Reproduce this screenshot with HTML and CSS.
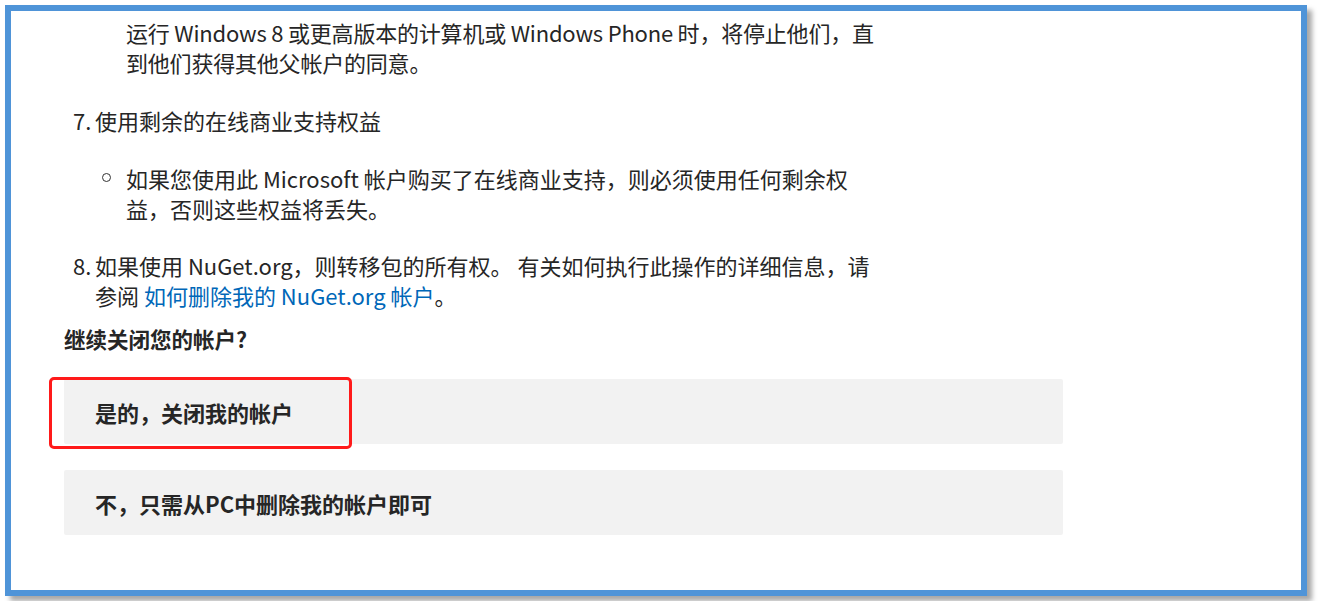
FILE: index.html
```html
<!DOCTYPE html>
<html lang="zh-CN">
<head>
<meta charset="utf-8">
<title>关闭帐户</title>
<link rel="stylesheet" href="styles.css">
</head>
<body>
<div class="frame">
  <div class="content">
    <div class="cont">运行 Windows 8 或更高版本的计算机或 Windows Phone 时，将停止他们，直<br>到他们获得其他父帐户的同意。</div>

    <div class="item item7">
      <span class="num">7.</span>
      <span class="txt">使用剩余的在线商业支持权益</span>
    </div>

    <div class="sub">
      <span class="circle"></span>
      <span class="txt">如果您使用此 Microsoft 帐户购买了在线商业支持，则必须使用任何剩余权<br>益，否则这些权益将丢失。</span>
    </div>

    <div class="item item8">
      <span class="num">8.</span>
      <span class="txt">如果使用 NuGet.org，则转移包的所有权。 有关如何执行此操作的详细信息，请<br>参阅 <a class="link" href="#">如何删除我的 NuGet.org 帐户</a>。</span>
    </div>

    <div class="question">继续关闭您的帐户?</div>

    <div class="btn btn-yes">是的，关闭我的帐户<span class="highlight"></span></div>
    <div class="btn btn-no">不，只需从PC中删除我的帐户即可</div>
  </div>
</div>
</body>
</html>
```

FILE: styles.css
```css
html, body {
  margin: 0;
  padding: 0;
  background: #ffffff;
}

body {
  padding: 5px;
  font-family: "Noto Sans CJK SC", "Noto Sans", sans-serif;
  color: #262626;
}

.frame {
  box-sizing: border-box;
  width: 1302px;
  height: 591px;
  border: 6px solid #4f94d8;
  background: #ffffff;
  box-shadow: 5px 5px 5px rgba(0, 0, 0, 0.35);
  overflow: hidden;
}

.content {
  padding: 6px 0 0 53px;
  font-size: 22px;
  line-height: 30px;
}

.cont {
  padding-left: 62px;
  letter-spacing: -0.2px;
}

.item {
  display: flex;
  margin-top: 28px;
}

.item .num {
  width: 22px;
  margin-left: 9px;
  flex: none;
}

.item8 {
  margin-top: 27px;
}

.sub {
  display: flex;
  align-items: flex-start;
  margin-top: 28px;
  padding-left: 38px;
}

.circle {
  box-sizing: border-box;
  flex: none;
  width: 9px;
  height: 9px;
  margin-top: 10px;
  margin-right: 15px;
  border: 1.6px solid #333;
  border-radius: 50%;
}

.link {
  color: #0067b8;
  text-decoration: none;
}

.question {
  margin-top: 14px;
  font-weight: 700;
  font-size: 21.5px;
}

.btn {
  position: relative;
  box-sizing: border-box;
  width: 999px;
  height: 65px;
  padding-left: 31px;
  display: flex;
  align-items: center;
  background: #f2f2f2;
  font-weight: 700;
  font-size: 22px;
  border-radius: 2px;
}

.btn-yes {
  margin-top: 25px;
}

.btn-no {
  margin-top: 26px;
}

.highlight {
  position: absolute;
  left: -15px;
  top: -2px;
  width: 303px;
  height: 72px;
  box-sizing: border-box;
  border: 3px solid #ff1a1a;
  border-radius: 5px;
}
```
